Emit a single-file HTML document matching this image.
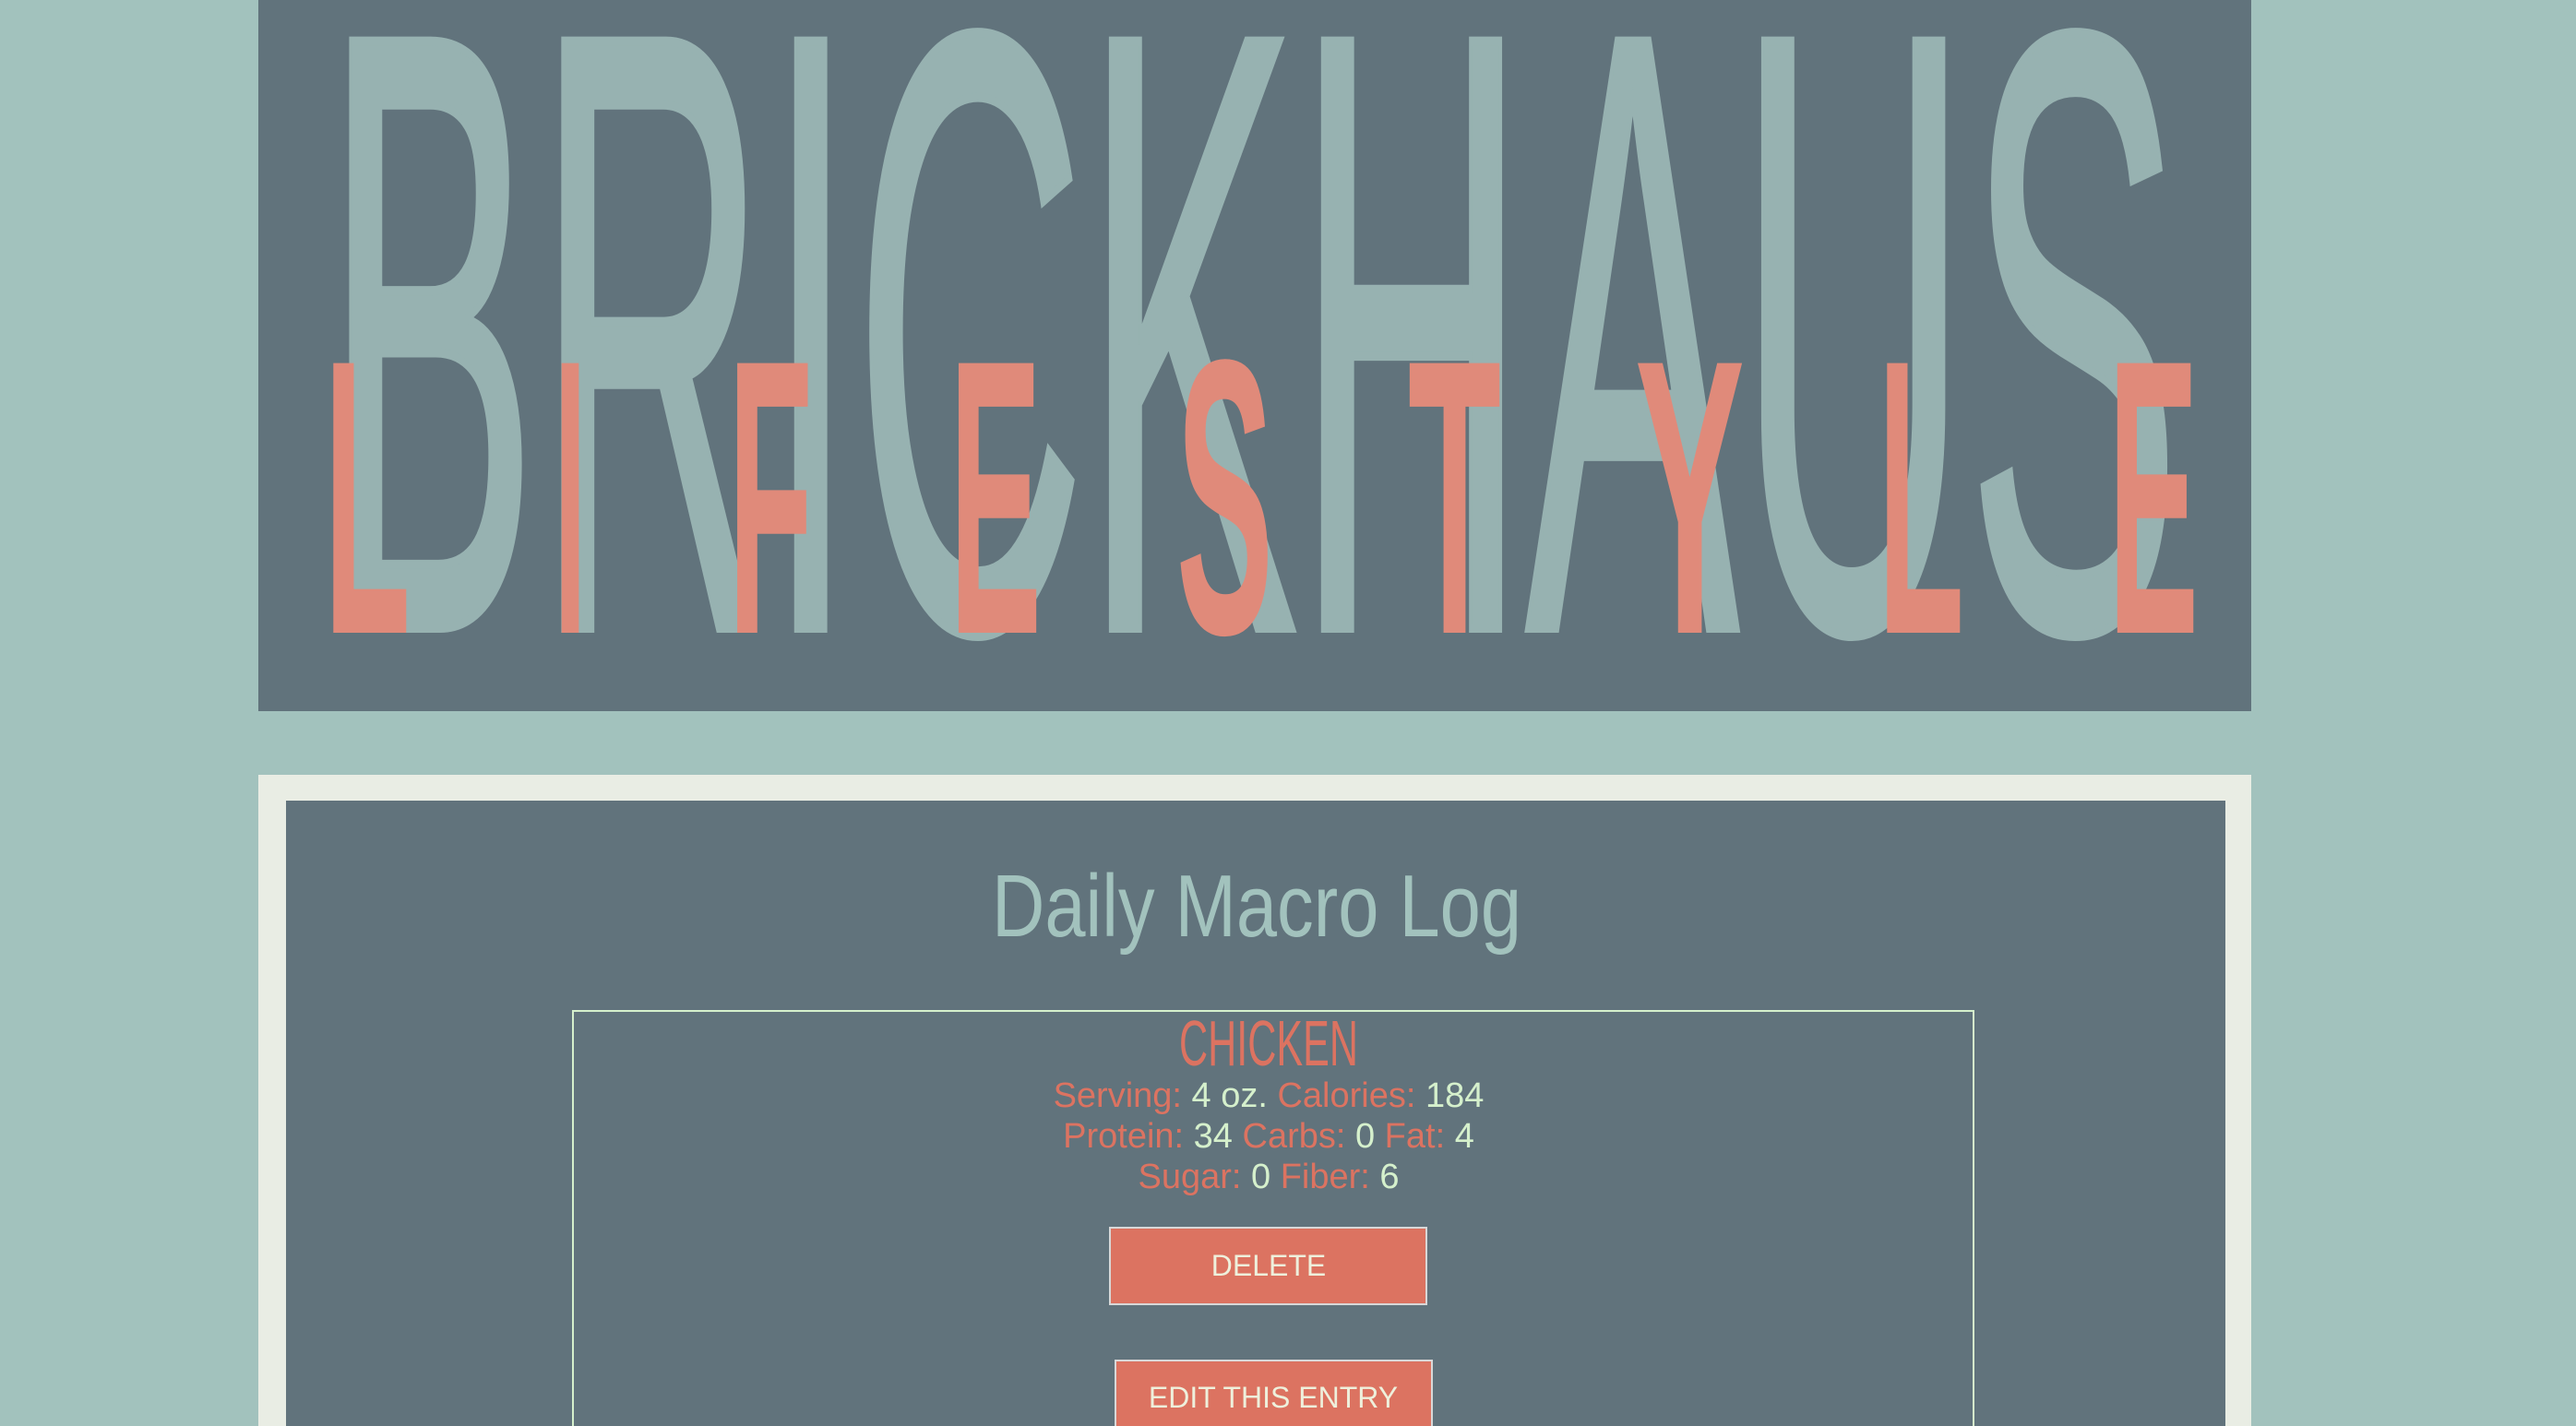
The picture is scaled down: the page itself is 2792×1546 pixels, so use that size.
<!DOCTYPE html>
<html><head><meta charset="utf-8"><style>
html,body{margin:0;padding:0;background:#a2c2bd;width:2792px;height:1546px;overflow:hidden;font-family:"Liberation Sans Narrow","Liberation Sans",sans-serif}
.banner{position:absolute;left:280px;top:0;width:2160px;height:771px;background:#61737c}
.wrap{position:absolute;left:280px;top:840px;width:2160px;height:706px;background:#e9ede4}
.inner{position:absolute;left:30px;top:28px;width:2102px;height:678px;background:#61737c}
svg{position:absolute;left:0;top:0}
.card{position:absolute;left:620px;top:1095px;width:1520px;height:451px;border:2px solid #d5f0cc;border-bottom:none;box-sizing:border-box}
.btn{position:absolute;background:#dc7361;border:2px solid #d8d8d8;box-sizing:border-box}
</style></head><body>
<div class="banner"></div>
<div class="wrap"><div class="inner"></div></div>
<div class="card"></div>
<div class="btn" style="left:1202px;top:1330px;width:345px;height:85px"></div>
<div class="btn" style="left:1208px;top:1474px;width:345px;height:72px;border-bottom:none"></div>
<svg width="2792" height="1546" xmlns="http://www.w3.org/2000/svg" font-family="Liberation Sans Narrow, Liberation Sans, sans-serif">
<text x="352" y="681" font-size="925" fill="#97b2b1" stroke="#97b2b1" stroke-width="10" textLength="2011" lengthAdjust="spacingAndGlyphs">BRICKHAUS</text>
<g fill="#e08a7a" font-size="425" font-weight="bold">
<text x="351" y="686" textLength="94" lengthAdjust="spacingAndGlyphs">L</text>
<text x="600" y="686" textLength="36" lengthAdjust="spacingAndGlyphs">I</text>
<text x="789" y="686" textLength="92" lengthAdjust="spacingAndGlyphs">F</text>
<text x="1029" y="686" textLength="100" lengthAdjust="spacingAndGlyphs">E</text>
<text x="1275" y="686" textLength="105" lengthAdjust="spacingAndGlyphs">S</text>
<text x="1526" y="686" textLength="101" lengthAdjust="spacingAndGlyphs">T</text>
<text x="1772" y="686" textLength="119" lengthAdjust="spacingAndGlyphs">Y</text>
<text x="2035" y="686" textLength="94" lengthAdjust="spacingAndGlyphs">L</text>
<text x="2285" y="686" textLength="98" lengthAdjust="spacingAndGlyphs">E</text>
</g>
<text x="1075" y="1015" font-size="96" fill="#a2c2bd" textLength="574" lengthAdjust="spacingAndGlyphs">Daily Macro Log</text>
<text x="1278" y="1155" font-size="70" fill="#dc7361" textLength="194" lengthAdjust="spacingAndGlyphs">CHICKEN</text>
<g font-size="38" text-anchor="middle">
<text x="1375" y="1200"><tspan fill="#dc7361">Serving:</tspan><tspan fill="#d5f0cc"> 4 oz. </tspan><tspan fill="#dc7361">Calories:</tspan><tspan fill="#d5f0cc"> 184</tspan></text>
<text x="1375" y="1244"><tspan fill="#dc7361">Protein:</tspan><tspan fill="#d5f0cc"> 34 </tspan><tspan fill="#dc7361">Carbs:</tspan><tspan fill="#d5f0cc"> 0 </tspan><tspan fill="#dc7361">Fat:</tspan><tspan fill="#d5f0cc"> 4</tspan></text>
<text x="1375" y="1288"><tspan fill="#dc7361">Sugar:</tspan><tspan fill="#d5f0cc"> 0 </tspan><tspan fill="#dc7361">Fiber:</tspan><tspan fill="#d5f0cc"> 6</tspan></text>
</g>
<text x="1375" y="1383" font-size="32" fill="#eef0dc" text-anchor="middle">DELETE</text>
<text x="1380" y="1526" font-size="32" fill="#eef0dc" text-anchor="middle">EDIT THIS ENTRY</text>
</svg>
</body></html>
